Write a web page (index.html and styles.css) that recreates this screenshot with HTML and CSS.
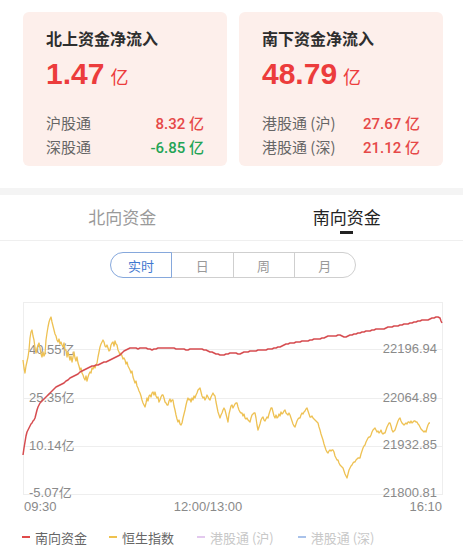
FILE: index.html
```html
<!DOCTYPE html>
<html lang="zh-CN">
<head>
<meta charset="utf-8">
<title>资金流向</title>
<link rel="stylesheet" href="styles.css">
</head>
<body>
<div class="page">
  <div class="cards">
    <div class="card">
      <div class="card-title">北上资金净流入</div>
      <div class="card-big"><span class="big-num">1.47</span><span class="big-unit">亿</span></div>
      <div class="card-rows">
        <div class="row"><span class="row-label">沪股通</span><span class="row-val up">8.32 亿</span></div>
        <div class="row"><span class="row-label">深股通</span><span class="row-val down">-6.85 亿</span></div>
      </div>
    </div>
    <div class="card">
      <div class="card-title">南下资金净流入</div>
      <div class="card-big"><span class="big-num">48.79</span><span class="big-unit">亿</span></div>
      <div class="card-rows">
        <div class="row"><span class="row-label">港股通 (沪)</span><span class="row-val up">27.67 亿</span></div>
        <div class="row"><span class="row-label">港股通 (深)</span><span class="row-val up">21.12 亿</span></div>
      </div>
    </div>
  </div>
  <div class="band"></div>
  <div class="tabs">
    <div class="tab">北向资金</div>
    <div class="tab active">南向资金</div>
  </div>
  <div class="seg">
    <div class="seg-item on">实时</div>
    <div class="seg-item">日</div>
    <div class="seg-item">周</div>
    <div class="seg-item">月</div>
  </div>
  <svg class="chart" viewBox="0 286 463 234" width="463" height="234">
    <g class="grid">
      <line x1="23" y1="302.5" x2="442" y2="302.5"/>
      <line x1="23" y1="349.5" x2="442" y2="349.5"/>
      <line x1="23" y1="398.5" x2="442" y2="398.5"/>
      <line x1="23" y1="446.5" x2="442" y2="446.5"/>
      <line x1="23" y1="494.5" x2="442" y2="494.5"/>
      <line x1="23.5" y1="302" x2="23.5" y2="495"/>
      <line x1="442.5" y1="302" x2="442.5" y2="495"/>
    </g>
    <g class="ylab">
      <text x="29" y="354">40.55亿</text>
      <text x="29" y="402">25.35亿</text>
      <text x="29" y="450">10.14亿</text>
      <text x="29" y="497">-5.07亿</text>
    </g>
    <g class="ylab right">
      <text x="437" y="353">22196.94</text>
      <text x="437" y="402">22064.89</text>
      <text x="437" y="449">21932.85</text>
      <text x="437" y="497">21800.81</text>
    </g>
    <g class="xlab">
      <text x="24" y="511">09:30</text>
      <text class="mid" x="208" y="511">12:00/13:00</text>
      <text class="end" x="442" y="511">16:10</text>
    </g>
    <polyline class="hsi" points="23,360 24,368 25,373 26,366 28,357 29,350 30,338 31,332 32,330 33,336 34,340 35,348 36,353 37,349 38,345 39,343 40,348 41,354 42,357 43,352 44,356 45,354 46,340 47,333 48,327 49,322 50,319 51,317 52,322 53,326 54,330 55,334 56,336 57,340 58,342 59,339 60,344 61,342 62,345 63,347 64,343 65,350 66,350 67,357 68,352 69,356 70,360 71,356 72,362 73,357 74,352 75,358 76,361 77,357 78,363 79,366 80,370 81,368 82,373 83,375 84,378 85,380 86,376 87,381 88,377 89,374 90,372 91,373 92,368 93,369 94,366 95,368 96,365 97,363 98,357 99,352 100,347 101,344 102,342 103,340 104,342 105,346 106,347 107,345 108,348 109,351 110,350 111,345 112,343 113,342 114,346 115,341 116,344 117,345 118,350 119,352 120,355 121,353 122,356 123,359 124,358 125,360 126,364 127,362 128,366 129,368 130,370 131,373 132,371 133,377 134,380 135,383 136,381 137,386 138,388 139,391 140,393 141,396 142,400 143,403 144,405 145,407 146,403 147,398 148,401 149,396 150,395 151,397 152,393 153,392 154,395 155,392 156,396 157,398 158,397 159,402 160,400 161,397 162,395 163,395 164,398 165,402 166,403 167,405 168,405 169,401 170,399 171,402 172,400 173,400 174,406 175,410 176,415 177,419 178,422 179,420 180,424 181,425 182,423 183,418 184,414 185,410 186,405 187,401 188,398 189,400 190,399 191,402 192,398 193,400 194,396 195,398 196,395 197,393 198,390 199,389 200,388 201,392 202,396 203,398 204,397 205,400 206,398 207,395 208,397 209,399 210,400 211,397 212,395 213,393 214,395 215,396 216,402 217,407 218,412 219,415 220,418 221,415 222,413 223,410 224,408 225,410 226,414 227,418 228,422 229,414 230,410 231,406 232,405 233,408 234,406 235,404 236,403 237,403 238,407 239,410 240,412 241,413 242,413 243,416 244,414 245,418 246,419 247,418 248,420 249,421 250,422 251,418 252,415 253,414 254,413 255,413 256,418 257,425 258,430 259,427 260,424 261,420 262,418 263,417 264,420 265,421 266,419 267,417 268,418 269,414 270,411 271,408 272,408 273,412 274,416 275,418 276,415 277,418 278,417 279,414 280,416 281,412 282,414 283,413 284,411 285,410 286,413 287,414 288,415 289,413 290,415 291,418 292,421 293,424 294,426 295,427 296,424 297,421 298,419 299,418 300,418 301,415 302,413 303,414 304,412 305,411 306,409 307,408 308,411 309,414 310,417 311,417 312,416 313,418 314,419 315,420 316,421 317,422 318,423 319,427 320,430 321,434 322,437 323,440 324,444 325,447 326,450 327,452 328,453 329,451 330,450 331,451 332,450 333,450 334,452 335,456 336,458 337,460 338,460 339,463 340,465 341,466 342,467 343,468 344,471 345,474 346,476 347,478 348,474 349,470 350,468 351,466 352,465 353,463 354,462 355,462 356,460 357,459 358,458 359,458 360,458 361,454 362,451 363,448 364,446 365,445 366,442 367,440 368,438 369,437 370,437 371,435 372,432 373,430 374,429 375,428 376,430 377,432 378,431 379,433 380,432 381,430 382,433 383,434 384,433 385,433 386,430 387,427 388,425 389,423 390,423 391,426 392,430 393,432 394,431 395,430 396,427 397,424 398,421 399,419 400,418 401,421 402,423 403,424 404,425 405,424 406,423 407,424 408,422 409,422 410,423 411,421 412,423 413,422 414,421 415,421 416,422 417,422 418,424 419,425 420,427 421,429 422,430 423,431 424,432 425,431 426,432 427,428 428,425 429,423 430,423"/>
    <polyline class="flow" points="23,455 24,448 25,442 26,436 27,432 28,430 29,428 30,426 31,424 32,423 33,421 34,420 35,418 36,414 37,410 38,407 39,405 40,403 42,401 44,399 46,397 48,395 50,393 52,391 54,389 56,387 58,386 60,385 62,384 64,383 66,381 68,380 70,378 72,377 74,376 76,375 78,374 80,372 82,371 84,370 86,369 88,368 90,367 92,366 94,366 96,365 98,365 100,364 102,363 104,362 106,362 108,361 110,360 112,359 114,358 116,357 118,356 120,355 122,353 124,351 126,350 128,349 130,348 132,348 134,348 136,348 138,349 140,348 142,348 144,348 146,348 148,349 150,349 152,350 154,349 156,349 158,348 160,348 162,348 164,348 166,348 168,348 170,348 172,348 174,348 176,349 178,349 180,349 182,349 184,349 186,350 188,350 190,349 192,349 194,349 196,349 198,349 200,349 202,349 204,350 206,350 208,351 210,352 212,352 214,353 216,354 218,354 220,355 222,355 224,355 226,354 228,354 230,353 232,353 234,353 236,353 238,354 240,354 242,353 244,352 246,352 248,352 250,351 252,351 254,351 256,351 258,350 260,350 262,350 264,350 266,350 268,349 270,349 272,349 274,348 276,348 278,347 280,347 282,346 284,345 286,344 288,344 290,343 292,343 294,343 296,342 298,342 300,342 302,341 304,341 306,341 308,341 310,340 312,340 314,339 316,339 318,339 320,339 322,338 324,338 326,337 328,336 330,336 332,336 334,336 336,336 338,335 340,335 342,336 344,337 346,337 348,336 350,335 352,335 354,334 356,334 358,333 360,333 362,332 364,332 366,331 368,331 370,331 372,330 374,330 376,329 378,329 380,329 382,329 384,329 386,328 388,327 390,327 392,327 394,326 396,326 398,326 400,325 402,325 404,324 406,324 408,324 410,323 412,323 414,322 416,322 418,321 420,321 422,320 424,320 426,320 428,320 430,319 432,318 434,318 436,317 438,317 440,318 441,321 442,323"/>
  </svg>
  <div class="legend">
    <div class="leg"><span class="dash red"></span><span class="leg-text">南向资金</span></div>
    <div class="leg"><span class="dash yellow"></span><span class="leg-text">恒生指数</span></div>
    <div class="leg off"><span class="dash purple"></span><span class="leg-text">港股通 (沪)</span></div>
    <div class="leg off"><span class="dash blue"></span><span class="leg-text">港股通 (深)</span></div>
  </div>
</div>
</body>
</html>
```
FILE: styles.css
```css
* { box-sizing: border-box; }
html, body { margin: 0; padding: 0; background: #fff; }
body {
  font-family: "Liberation Sans", "Noto Sans CJK SC", sans-serif;
  color: #333;
  width: 463px;
  height: 551px;
  overflow: hidden;
}
.cards {
  display: flex;
  gap: 12px;
  padding: 12px 20px 0 23px;
}
.card {
  width: 204px;
  height: 154px;
  background: #fdefeb;
  border-radius: 6px;
  padding: 14px 23px 0 23px;
}
.card-title {
  font-family: "Noto Sans CJK SC", sans-serif;
  font-size: 16px;
  font-weight: 700;
  line-height: 24px;
  color: #2e2e2e;
}
.card-big {
  margin-top: 6px;
  height: 36px;
  display: flex;
  align-items: baseline;
  color: #ec3c3c;
  line-height: 36px;
}
.big-num {
  font-size: 30px;
  font-weight: 700;
}
.big-unit {
  font-family: "Noto Sans CJK SC", sans-serif;
  font-size: 18px;
  margin-left: 6px;
}
.card-rows {
  margin-top: 18px;
  display: flex;
  flex-direction: column;
}
.row {
  display: flex;
  justify-content: space-between;
  align-items: center;
  height: 24px;
}
.row-label {
  font-family: "Noto Sans CJK SC", sans-serif;
  font-size: 15px;
  color: #666;
}
.row-val {
  font-family: Roboto, "Liberation Sans", "Noto Sans CJK SC", sans-serif;
  font-size: 15px;
  font-weight: 500;
}
.up { color: #e64848; }
.down { color: #23a455; }
.band {
  margin-top: 22px;
  height: 7px;
  background: #f4f4f4;
}
.tabs {
  display: flex;
  height: 46px;
  border-bottom: 1px solid #efefef;
}
.tab {
  flex: 1;
  display: flex;
  align-items: center;
  justify-content: center;
  font-family: "Noto Sans CJK SC", sans-serif;
  font-size: 17px;
  color: #9a9a9a;
  position: relative;
  padding-bottom: 2px;
}
.tab:first-child { padding-left: 10px; }
.tab.active {
  color: #222;
  padding-right: 4px;
}
.tab.active::after {
  content: "";
  position: absolute;
  left: 50%;
  margin-left: -9px;
  bottom: 6px;
  width: 13px;
  height: 3px;
  background: #222;
}
.seg {
  display: flex;
  width: 246px;
  height: 26px;
  margin: 11px 0 0 110px;
}
.seg-item {
  flex: 1;
  display: flex;
  align-items: center;
  justify-content: center;
  border: 1px solid #cfcfcf;
  margin-left: -1px;
  font-family: "Noto Sans CJK SC", sans-serif;
  font-size: 13px;
  color: #9a9a9a;
}
.seg-item:first-child {
  margin-left: 0;
  border-radius: 13px 0 0 13px;
}
.seg-item:last-child { border-radius: 0 13px 13px 0; }
.seg-item.on {
  color: #3f78cf;
  border-color: #86a8dc;
  position: relative;
  z-index: 1;
}
.chart { display: block; margin-top: 8px; }
.grid line { stroke: #eeeeee; stroke-width: 1; }
.ylab text, .xlab text {
  font-family: "Liberation Sans", "Noto Sans CJK SC", sans-serif;
  font-size: 13px;
  fill: #8a8a8a;
}
.ylab.right text { text-anchor: end; }
.xlab .mid { text-anchor: middle; }
.xlab .end { text-anchor: end; }
.hsi { fill: none; stroke: #eec153; stroke-width: 1.3; stroke-linejoin: round; }
.flow { fill: none; stroke: #d64c50; stroke-width: 1.5; stroke-linejoin: round; }
.legend {
  display: flex;
  align-items: center;
  height: 34px;
  padding-left: 22px;
}
.leg {
  display: flex;
  align-items: center;
  margin-right: 22px;
}
.leg:nth-child(2) { margin-right: 23px; }
.leg:nth-child(3) { margin-right: 24px; }
.dash {
  width: 8px;
  height: 2px;
  margin-right: 5px;
}
.red { background: #e04b4b; }
.yellow { background: #efc24f; }
.purple { background: #e3c9ee; }
.blue { background: #a9c2ea; }
.leg-text {
  font-family: "Noto Sans CJK SC", sans-serif;
  font-size: 13px;
  color: #666;
}
.leg.off .leg-text { color: #c8c8c8; }
```
